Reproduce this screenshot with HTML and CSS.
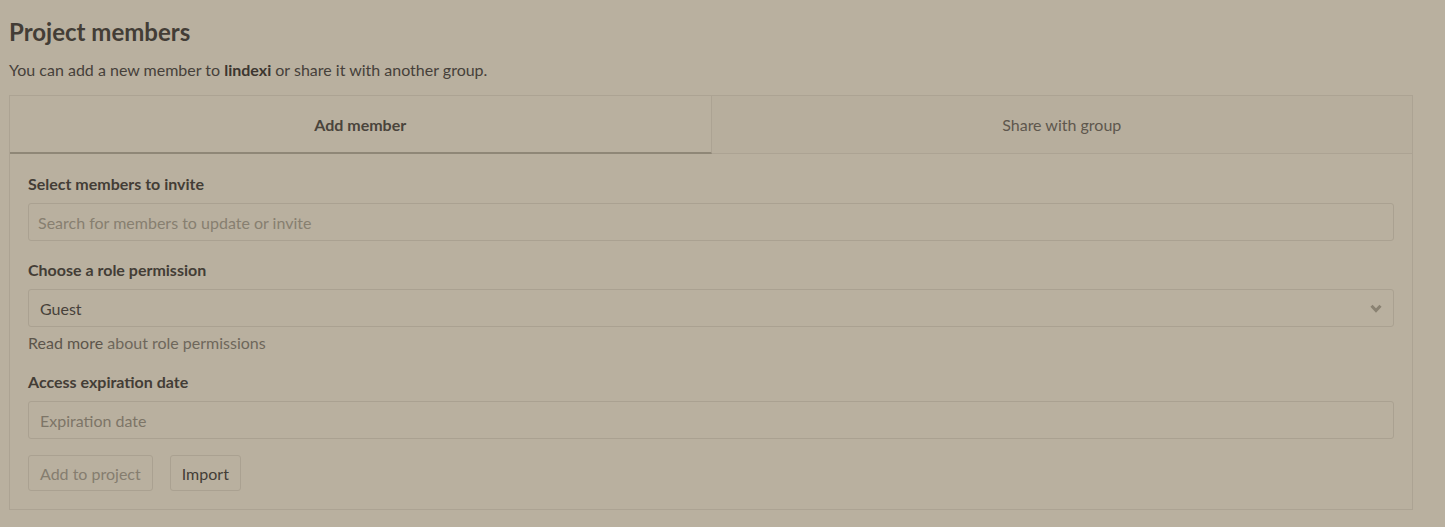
FILE: index.html
```html
<!DOCTYPE html>
<html lang="en">
<head>
<meta charset="UTF-8">
<title>Project members</title>
<link rel="stylesheet" href="styles.css">
</head>
<body>
  <div class="page">
    <h2 class="title">Project members</h2>
    <p class="intro">You can add a new member to <strong>lindexi</strong> or share it with another group.</p>

    <div class="card">
      <div class="tabs">
        <div class="tab active">Add member</div>
        <div class="tab">Share with group</div>
      </div>
      <div class="card-body">
        <label class="label">Select members to invite</label>
        <div class="field placeholder">Search for members to update or invite</div>

        <label class="label">Choose a role permission</label>
        <div class="field select">
          <span>Guest</span>
          <svg class="chevron" viewBox="0 0 12 9" width="12" height="9"><path d="M1.5 1.8 L6 6.5 L10.5 1.8" fill="none" stroke="#8a8272" stroke-width="3"/></svg>
        </div>
        <div class="help"><span class="link-strong">Read more</span> about role permissions</div>

        <label class="label">Access expiration date</label>
        <div class="field date">Expiration date</div>

        <div class="actions">
          <button class="btn disabled">Add to project</button>
          <button class="btn">Import</button>
        </div>
      </div>
    </div>
  </div>
</body>
</html>
```

FILE: styles.css
```css
body {
  margin: 0;
  background: #b9b09f;
  color: #46403a;
  font-family: "Lato", "Liberation Sans", sans-serif;
  font-size: 16px;
}
.page {
  padding: 14px 32px 16px 9px;
}
.title {
  margin: 0;
  font-size: 24px;
  font-weight: 700;
  line-height: 36px;
  color: #433d36;
}
.intro {
  margin: 10px 0 15px 0;
  line-height: 20px;
}
.intro strong {
  font-weight: 700;
  color: #3c3630;
}
.card {
  border: 1px solid #aca393;
}
.tabs {
  display: flex;
  height: 58px;
}
.tab {
  flex: 1;
  display: flex;
  align-items: center;
  justify-content: center;
  font-weight: 700;
  color: #4a443c;
  border-bottom: 1px solid #aca393;
}
.tab.active {
  border-bottom: 2px solid #8f8777;
  border-right: 1px solid #aca393;
  height: 56px;
}
.tab:not(.active) {
  background: #b7ae9d;
  font-weight: 400;
  color: #5e574d;
}
.card-body {
  padding: 20px 18px 18px 18px;
}
.label {
  display: block;
  font-weight: 700;
  line-height: 20px;
  margin-bottom: 9px;
  color: #433d36;
}
.field {
  box-sizing: border-box;
  height: 38px;
  border: 1px solid #aaa191;
  border-radius: 3px;
  display: flex;
  align-items: center;
  padding: 0 11px;
  margin-bottom: 19px;
}
.placeholder {
  padding-left: 9px;
  color: #877f70;
}
.select {
  justify-content: space-between;
  color: #47413a;
  margin-bottom: 6px;
}
.date {
  color: #7d7567;
  margin-bottom: 16px;
}
.help {
  line-height: 20px;
  margin-bottom: 19px;
  color: #6e675b;
}
.link-strong {
  color: #5c554b;
}
.actions {
  display: flex;
  gap: 17px;
}
.btn {
  font-family: inherit;
  font-size: 16px;
  height: 36px;
  padding: 0 11px;
  background: transparent;
  border: 1px solid #aaa191;
  border-radius: 3px;
  color: #433d36;
}
.btn.disabled {
  color: #857d6f;
}
```
